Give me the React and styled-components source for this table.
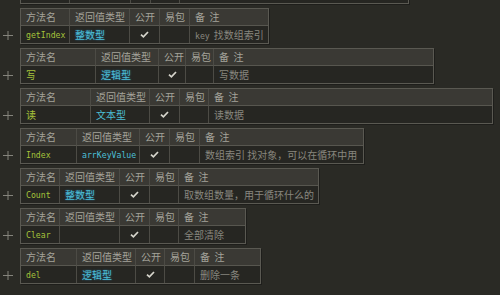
import React from "react";
import styled, { createGlobalStyle } from "styled-components";

const GlobalStyle = createGlobalStyle`
  html, body { margin: 0; padding: 0; background: #2a2a25; }
  body { overflow: hidden; }
  * { box-sizing: border-box; }
`;

const Page = styled.div`
  width: 500px;
  height: 295px;
  overflow: hidden;
  background: #2a2a25;
  padding-top: 8px;
  display: flex;
  flex-direction: column;
  gap: 4px;
  font-family: "Noto Sans CJK SC", "Noto Sans", sans-serif;
`;

const Block = styled.div`
  display: flex;
  align-items: stretch;
  margin-top: ${(p) => (p.$partial ? "-40px" : "0")};
`;

const Gutter = styled.div`
  width: 20px;
  flex: none;
  display: flex;
  flex-direction: column;
  justify-content: flex-end;
`;

const PlusSlot = styled.div`
  height: 18px;
  display: flex;
  align-items: center;
  padding-left: 3px;
  color: #85847c;
`;

const Table = styled.div`
  display: grid;
  grid-template-columns: ${(p) => p.$cols};
  grid-template-rows: 17px 17px;
  border: 1px solid #5a5952;
  box-shadow: 1px 1px 0 #1e1e1b;
  background: #262622;
`;

const HeadCell = styled.div`
  background: #3a3934;
  border-right: ${(p) => (p.$last ? "none" : "1px solid #4c4b45")};
  border-bottom: 1px solid #57564f;
  color: #a4a39a;
  font-size: 10px;
  line-height: 16px;
  padding-left: 5px;
  white-space: nowrap;
  overflow: hidden;
`;

const DataCell = styled.div`
  border-right: ${(p) => (p.$last ? "none" : "1px solid #4c4b45")};
  display: flex;
  align-items: center;
  justify-content: ${(p) => (p.$center ? "center" : "flex-start")};
  padding-left: ${(p) => (p.$center ? "0" : "5px")};
  white-space: nowrap;
  overflow: hidden;
  font-size: 10px;
`;

const Name = styled.span`
  color: #a5c23a;
  font-family: ${(p) => (p.$mono ? '"DejaVu Sans Mono", monospace' : '"Noto Sans CJK SC", sans-serif')};
  font-size: ${(p) => (p.$mono ? "8.2px" : "10px")};
`;

const TypeText = styled.span`
  color: #4cbfd6;
  font-family: ${(p) => (p.$mono ? '"DejaVu Sans Mono", monospace' : '"Noto Sans CJK SC", sans-serif')};
  font-size: ${(p) => (p.$mono ? "8.2px" : "10px")};
  text-shadow: ${(p) => (p.$glow ? "0 0 2px rgba(40,120,170,0.9)" : "none")};
`;

const Note = styled.span`
  color: #88877f;
  font-size: 10px;
`;

const Mono = styled.span`
  font-family: "DejaVu Sans Mono", monospace;
  font-size: 8.2px;
  margin-right: 4px;
`;

const Plus = () => (
  <svg width="10" height="9" viewBox="0 0 10 9">
    <path d="M0 4.5H10M5 0V9" stroke="currentColor" strokeWidth="1" />
  </svg>
);

const Check = () => (
  <svg width="9" height="7" viewBox="0 0 9 7">
    <path d="M1 3.6L3.4 5.8L8 1" stroke="#d6d5cc" strokeWidth="1.7" fill="none" />
  </svg>
);

const isMono = (s) => /^[A-Za-z]/.test(s);

const rows = [
  { partial: true, lines: [20, 69, 130, 150, 179, 408], name: "", type: "", pub: false, note: "" },
  { lines: [20, 69, 129, 159, 189, 268], name: "getIndex", type: "整数型", glow: true, pub: true, key: "key", note: "找数组索引" },
  { lines: [20, 95, 158, 185, 213, 433], name: "写", type: "逻辑型", glow: true, pub: true, note: "写数据" },
  { lines: [20, 90, 149, 179, 208, 492], name: "读", type: "文本型", pub: true, note: "读数据" },
  { lines: [20, 76, 139, 169, 199, 363], name: "Index", type: "arrKeyValue", pub: true, note: "数组索引 找对象，可以在循环中用" },
  { lines: [20, 59, 119, 149, 178, 318], name: "Count", type: "整数型", glow: true, pub: true, note: "取数组数量，用于循环什么的" },
  { lines: [20, 59, 119, 149, 178, 245], name: "Clear", type: "", pub: true, note: "全部清除" },
  { lines: [20, 76, 135, 164, 194, 260], name: "del", type: "逻辑型", glow: true, pub: true, note: "删除一条" },
];

const colsOf = (lines) => {
  const w = [];
  for (let i = 0; i < lines.length - 1; i++) {
    w.push(lines[i + 1] - lines[i]);
  }
  w[w.length - 1] -= 1;
  return w.map((v) => `${v}px`).join(" ");
};

const heads = ["方法名", "返回值类型", "公开", "易包", "备\u00a0\u00a0注"];

function MethodTable({ r }) {
  return (
    <Block $partial={r.partial}>
      <Gutter>
        {!r.partial && (
          <PlusSlot>
            <Plus />
          </PlusSlot>
        )}
      </Gutter>
      <Table $cols={colsOf(r.lines)}>
        {heads.map((h, i) => (
          <HeadCell key={i} $last={i === heads.length - 1}>
            {r.partial ? "" : h}
          </HeadCell>
        ))}
        <DataCell>
          <Name $mono={isMono(r.name)}>{r.name}</Name>
        </DataCell>
        <DataCell>
          <TypeText $mono={isMono(r.type)} $glow={r.glow}>
            {r.type}
          </TypeText>
        </DataCell>
        <DataCell $center>{r.pub && <Check />}</DataCell>
        <DataCell />
        <DataCell $last>
          <Note>
            {r.key && <Mono>{r.key}</Mono>}
            {r.note}
          </Note>
        </DataCell>
      </Table>
    </Block>
  );
}

export default function App() {
  return (
    <>
      <GlobalStyle />
      <Page>
        {rows.map((r, i) => (
          <MethodTable key={i} r={r} />
        ))}
      </Page>
    </>
  );
}
